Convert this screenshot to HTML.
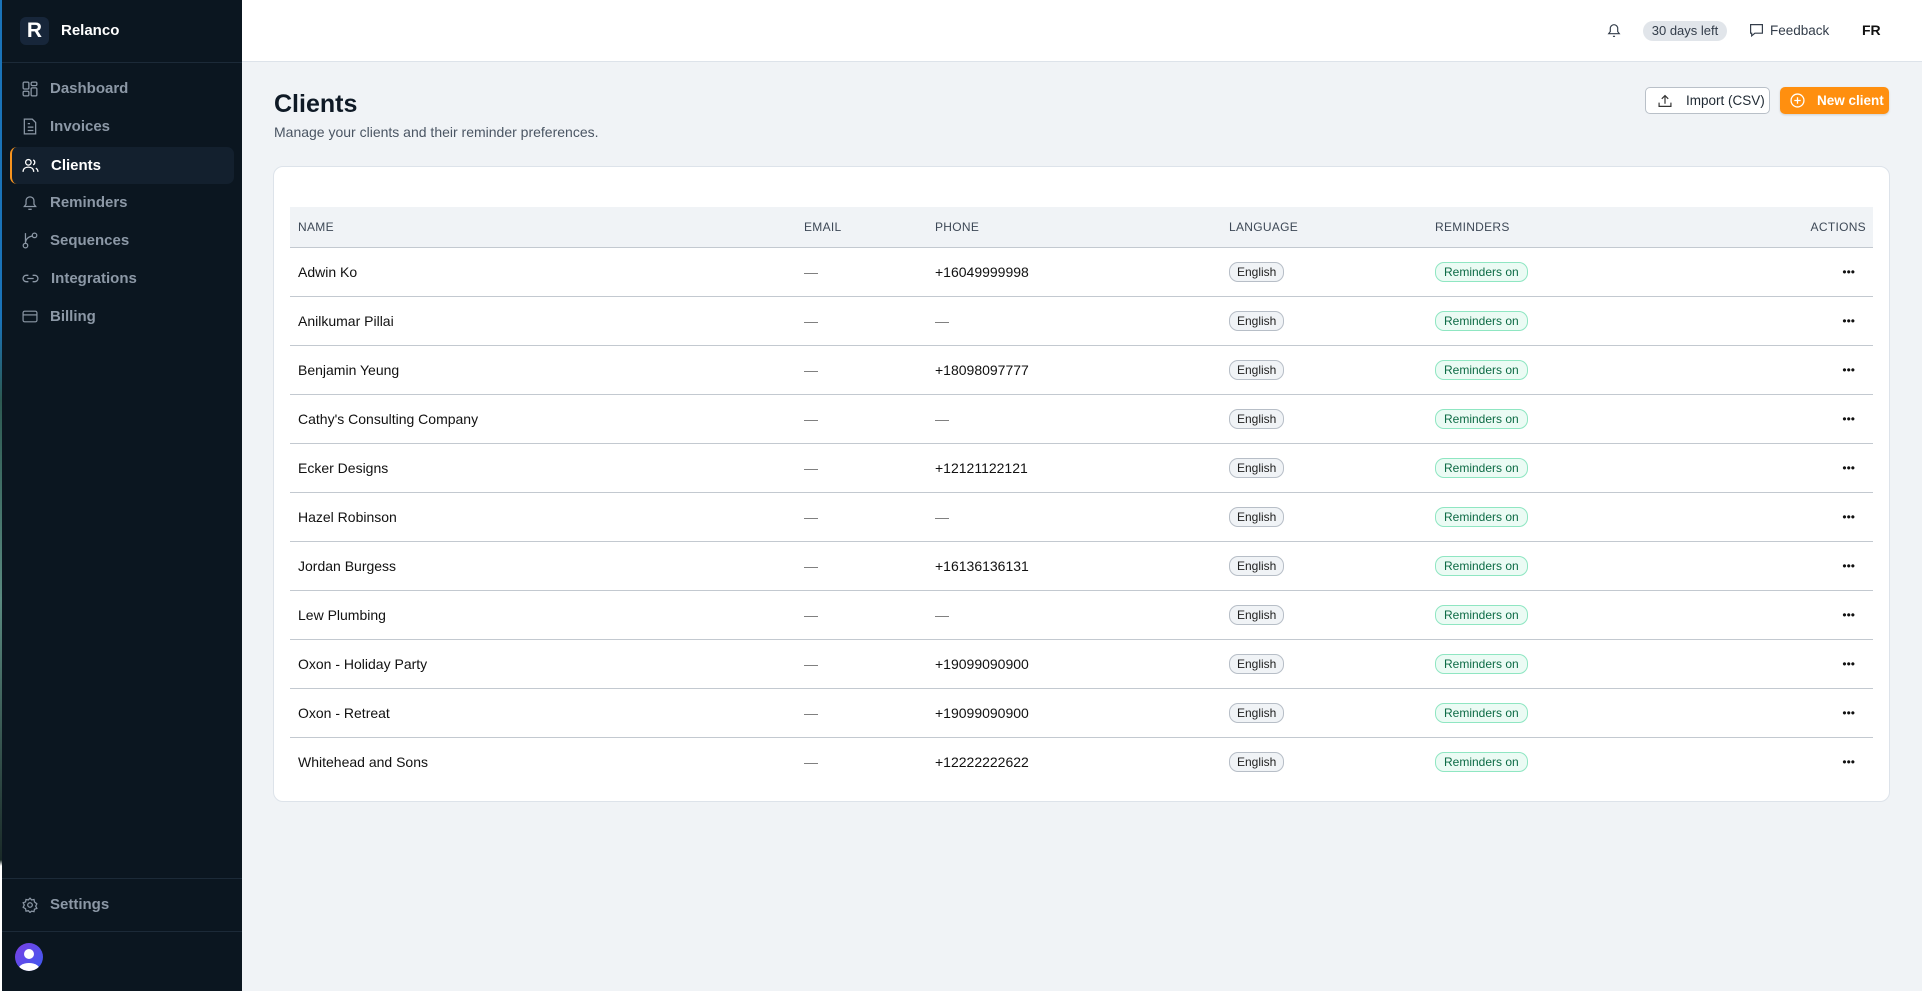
<!DOCTYPE html>
<html><head><meta charset="utf-8"><style>
*{box-sizing:border-box;margin:0;padding:0}
body{width:1922px;height:991px;overflow:hidden;background:#f0f3f6;font-family:"Liberation Sans",sans-serif;color:#0f172a;position:relative}
.strip{position:absolute;left:0;top:0;width:2px;height:991px;background:linear-gradient(#1a73b8 0,#1a73b8 320px,#2d5a52 400px,#5a8a80 600px,#1a2a28 860px,#fff 866px)}
.sb{position:absolute;left:2px;top:0;width:240px;height:991px;background:#0b1620}
.logo{position:absolute;left:18px;top:17px;width:29px;height:28px;border-radius:6px;background:#17263a;color:#fff;font-weight:bold;font-size:21px;text-align:center;line-height:28px}
.brand{position:absolute;left:59px;top:22px;color:#fff;font-weight:bold;font-size:15px}
.hl{position:absolute;left:0;width:240px;height:1px;background:#1c2a38}
.nav{position:absolute;left:8px;width:224px;height:37px;display:flex;align-items:center;color:#8c98a6;font-size:15px;font-weight:bold}
.nav svg{margin-left:12px;margin-right:12px}
.nav.act{background:#13202e;border-radius:7px;color:#fff;border-left:2px solid #f7931e}
.nav.act svg{margin-left:10px}
.hdr{position:absolute;left:242px;top:0;right:0;height:62px;background:#fff;border-bottom:1px solid #dde3ea}
.pill{position:absolute;left:1643px;top:21px;width:84px;height:20px;border-radius:10px;background:#e1e5ea;font-size:13px;color:#333d4a;text-align:center;line-height:20px}
.t{position:absolute;font-size:13px;color:#333d4a}
h1{position:absolute;left:274px;top:90px;font-size:25px;font-weight:bold;color:#0f1a26}
.sub{position:absolute;left:274px;top:124px;font-size:14px;color:#4a5563}
.btn{position:absolute;top:87px;height:27px;border-radius:5px;font-size:13.5px;display:flex;align-items:center}
.card{position:absolute;left:273px;top:166px;width:1617px;height:636px;background:#fff;border:1px solid #dde3ea;border-radius:10px}
table{position:absolute;left:16px;top:40px;width:1583px;border-collapse:collapse;font-size:14px}
th{height:40px;background:#f0f3f6;text-align:left;font-weight:normal;font-size:12px;color:#3d4856;letter-spacing:.3px;border-bottom:1px solid #c3c9d0;padding:0}
td{height:49px;border-bottom:1px solid #c3c9d0;padding:0;color:#111}
tr:last-child td{border-bottom:none}
.c1{padding-left:8px;width:514px}.c2{width:131px;color:#777}.c3{width:294px}.c4{width:206px}
.en{display:inline-block;border:1px solid #b7bec7;background:#f0f3f6;border-radius:9px;font-size:12px;padding:2px 7px;color:#222}
.ro{display:inline-block;border:1px solid #8fe6c2;background:#ebfbf4;border-radius:9px;font-size:12px;padding:2px 8px;color:#0d6b45}
.ac{text-align:right;padding-right:18px;font-size:12px}
th.ac{padding-right:7px;font-weight:normal;letter-spacing:.3px}
</style></head><body>
<div class="strip"></div>
<div class="sb">
<div class="logo">R</div><div class="brand">Relanco</div>
<div class="hl" style="top:62px"></div>
<div class="nav" style="top:70px"><svg width="16" height="16" viewBox="0 0 14 14" fill="none" stroke="#8c98a6" stroke-width="1.1"><rect x="1" y="1" width="5" height="6" rx="1"/><rect x="8" y="1" width="5" height="3" rx="1"/><rect x="1" y="9" width="5" height="4" rx="1"/><rect x="8" y="6" width="5" height="7" rx="1"/></svg>Dashboard</div>
<div class="nav" style="top:108px"><svg width="16" height="17" viewBox="0 0 14 15" fill="none" stroke="#8c98a6" stroke-width="1.1"><path d="M2 1h7l3 3v10H2z"/><path d="M5 8h5M5 11h5M5 5h2"/></svg>Invoices</div>
<div class="nav act" style="top:147px"><svg width="17" height="15" viewBox="0 0 16 14" fill="none" stroke="#fff" stroke-width="1.2"><circle cx="6" cy="4" r="2.6"/><path d="M1 13c0-3 2.2-4.5 5-4.5s5 1.5 5 4.5"/><path d="M10.5 1.8a2.5 2.5 0 0 1 0 4.6M13 9.5c1.3.7 2 1.8 2 3.5"/></svg>Clients</div>
<div class="nav" style="top:184px"><svg width="16" height="17" viewBox="0 0 14 15" fill="none" stroke="#8c98a6" stroke-width="1.1"><path d="M2 11h10l-1.5-2V6a3.5 3.5 0 0 0-7 0v3z"/><path d="M5.5 13.5h3"/></svg>Reminders</div>
<div class="nav" style="top:222px"><svg width="16" height="17" viewBox="0 0 14 15" fill="none" stroke="#8c98a6" stroke-width="1.1"><circle cx="3" cy="12" r="2"/><circle cx="11" cy="3" r="2"/><path d="M3 1v9M9 3.5C6 4 3 6 3 10"/></svg>Sequences</div>
<div class="nav" style="top:260px"><svg width="17" height="11" viewBox="0 0 16 10" fill="none" stroke="#8c98a6" stroke-width="1.2"><path d="M6 2H4a3 3 0 0 0 0 6h2M10 2h2a3 3 0 0 1 0 6h-2M5 5h6"/></svg>Integrations</div>
<div class="nav" style="top:298px"><svg width="16" height="13" viewBox="0 0 15 12" fill="none" stroke="#8c98a6" stroke-width="1.1"><rect x="1" y="1" width="13" height="10" rx="1.5"/><path d="M1 4.5h13"/></svg>Billing</div>
<div class="hl" style="top:878px"></div>
<div class="nav" style="top:886px"><svg width="16" height="16" viewBox="0 0 14 14" fill="none" stroke="#8c98a6" stroke-width="1.1"><circle cx="7" cy="7" r="2"/><path d="M7 1l1.4 1.6 2.1-.4.4 2.1L13 6l-1 2 1 2-2.1.7-.4 2.1-2.1-.4L7 13.5 5.6 12l-2.1.4-.4-2.1L1 9l1-2-1-2 2.1-.7.4-2.1 2.1.4z"/></svg>Settings</div>
<div class="hl" style="top:931px"></div>
<svg style="position:absolute;left:12px;top:942px" width="30" height="30" viewBox="0 0 30 30"><defs><linearGradient id="g" x1="0" y1="0" x2="1" y2="1"><stop offset="0" stop-color="#7b3fe4"/><stop offset="1" stop-color="#3b5bf0"/></linearGradient><clipPath id="c"><circle cx="15" cy="15" r="14"/></clipPath></defs><circle cx="15" cy="15" r="14" fill="url(#g)"/><g clip-path="url(#c)" fill="#fff"><circle cx="15" cy="12" r="5"/><ellipse cx="15" cy="28" rx="11" ry="7"/></g></svg>
</div>
<div class="hdr"></div>
<svg style="position:absolute;left:1606px;top:21px" width="16" height="18" viewBox="0 0 14 17" fill="none" stroke="#333d4a" stroke-width="1.1"><path d="M2 12h10l-1.5-2V7a3.5 3.5 0 0 0-7 0v3z"/><path d="M6 14.5h2"/></svg>
<div class="pill">30 days left</div>
<svg style="position:absolute;left:1749px;top:23px" width="15" height="15" viewBox="0 0 14 14" fill="none" stroke="#333d4a" stroke-width="1.1"><path d="M1.5 1.5h11v8h-7l-3 2.5v-2.5h-1z"/></svg>
<div class="t" style="left:1770px;top:23px;font-size:13.5px">Feedback</div>
<div class="t" style="left:1862px;top:22px;font-size:14px;font-weight:bold;color:#111">FR</div>
<h1>Clients</h1>
<div class="sub">Manage your clients and their reminder preferences.</div>
<div class="btn" style="left:1645px;width:125px;background:#fff;border:1px solid #b9c0c8;color:#1f2933"><svg style="margin:0 14px 0 12px" width="14" height="14" viewBox="0 0 13 13" fill="none" stroke="#333" stroke-width="1.1"><path d="M6.5 9V1.5M3.5 4.5l3-3 3 3M1 8v3.5h11V8"/></svg>Import (CSV)</div>
<div class="btn" style="left:1780px;width:109px;background:#ff8f0f;color:#fff;font-weight:bold;box-shadow:0 1px 2px rgba(0,0,0,.15)"><svg style="margin:0 12px 0 10px" width="15" height="15" viewBox="0 0 14 14" fill="none" stroke="#fff" stroke-width="1.2"><circle cx="7" cy="7" r="6"/><path d="M7 4v6M4 7h6"/></svg>New client</div>
<div class="card"><table>
<tr><th class="c1">NAME</th><th class="c2" style="color:#3d4856">EMAIL</th><th class="c3">PHONE</th><th class="c4">LANGUAGE</th><th>REMINDERS</th><th class="ac">ACTIONS</th></tr>
<tr><td class="c1">Adwin Ko</td><td class="c2">—</td><td>+16049999998</td><td><span class="en">English</span></td><td><span class="ro">Reminders on</span></td><td class="ac">•••</td></tr>
<tr><td class="c1">Anilkumar Pillai</td><td class="c2">—</td><td style="color:#777">—</td><td><span class="en">English</span></td><td><span class="ro">Reminders on</span></td><td class="ac">•••</td></tr>
<tr><td class="c1">Benjamin Yeung</td><td class="c2">—</td><td>+18098097777</td><td><span class="en">English</span></td><td><span class="ro">Reminders on</span></td><td class="ac">•••</td></tr>
<tr><td class="c1">Cathy's Consulting Company</td><td class="c2">—</td><td style="color:#777">—</td><td><span class="en">English</span></td><td><span class="ro">Reminders on</span></td><td class="ac">•••</td></tr>
<tr><td class="c1">Ecker Designs</td><td class="c2">—</td><td>+12121122121</td><td><span class="en">English</span></td><td><span class="ro">Reminders on</span></td><td class="ac">•••</td></tr>
<tr><td class="c1">Hazel Robinson</td><td class="c2">—</td><td style="color:#777">—</td><td><span class="en">English</span></td><td><span class="ro">Reminders on</span></td><td class="ac">•••</td></tr>
<tr><td class="c1">Jordan Burgess</td><td class="c2">—</td><td>+16136136131</td><td><span class="en">English</span></td><td><span class="ro">Reminders on</span></td><td class="ac">•••</td></tr>
<tr><td class="c1">Lew Plumbing</td><td class="c2">—</td><td style="color:#777">—</td><td><span class="en">English</span></td><td><span class="ro">Reminders on</span></td><td class="ac">•••</td></tr>
<tr><td class="c1">Oxon - Holiday Party</td><td class="c2">—</td><td>+19099090900</td><td><span class="en">English</span></td><td><span class="ro">Reminders on</span></td><td class="ac">•••</td></tr>
<tr><td class="c1">Oxon - Retreat</td><td class="c2">—</td><td>+19099090900</td><td><span class="en">English</span></td><td><span class="ro">Reminders on</span></td><td class="ac">•••</td></tr>
<tr><td class="c1">Whitehead and Sons</td><td class="c2">—</td><td>+12222222622</td><td><span class="en">English</span></td><td><span class="ro">Reminders on</span></td><td class="ac">•••</td></tr>
</table></div>
</body></html>
